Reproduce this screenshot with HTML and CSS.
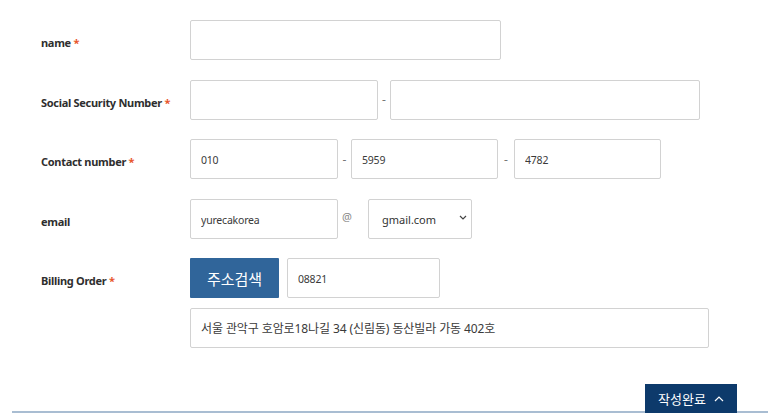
FILE: index.html
```html
<!DOCTYPE html>
<html lang="ko">
<head>
<meta charset="utf-8">
<link rel="stylesheet" href="styles.css">
</head>
<body>
<form class="form">
  <div class="row">
    <label class="label">name <span class="req">*</span></label>
    <div class="fields">
      <input class="box w-name" type="text">
    </div>
  </div>
  <div class="row">
    <label class="label">Social Security Number <span class="req">*</span></label>
    <div class="fields">
      <input class="box w-ssn1" type="text">
      <span class="sep sep-ssn">-</span>
      <input class="box w-ssn2" type="text">
    </div>
  </div>
  <div class="row">
    <label class="label">Contact number <span class="req">*</span></label>
    <div class="fields">
      <input class="box w-ph" type="text" value="010">
      <span class="sep sep-ph1">-</span>
      <input class="box w-ph2" type="text" value="5959">
      <span class="sep sep-ph2">-</span>
      <input class="box w-ph2" type="text" value="4782">
    </div>
  </div>
  <div class="row">
    <label class="label">email</label>
    <div class="fields">
      <input class="box w-ph" type="text" value="yurecakorea">
      <span class="sep sep-at">@</span>
      <div class="select">
        <span>gmail.com</span>
        <svg class="chev" width="8" height="5" viewBox="0 0 8 5"><path d="M1 1l3 3 3-3" fill="none" stroke="#444" stroke-width="1.2"/></svg>
      </div>
    </div>
  </div>
  <div class="row">
    <label class="label">Billing Order <span class="req">*</span></label>
    <div class="fields">
      <button type="button" class="search">주소검색</button>
      <input class="box w-zip" type="text" value="08821">
    </div>
  </div>
  <div class="addr-row">
    <input class="box w-addr addr" type="text" value="서울 관악구 호암로18나길 34 (신림동) 동산빌라 가동 402호">
  </div>
  <div class="footer">
    <button type="button" class="submit">작성완료 <svg width="10" height="6" viewBox="0 0 10 6"><path d="M1 5l4-4 4 4" fill="none" stroke="#fff" stroke-width="1.2"/></svg></button>
  </div>
</form>
</body>
</html>
```
FILE: styles.css
```css
* { box-sizing: border-box; }
html, body { margin: 0; padding: 0; background: #fff; }
body {
  width: 768px;
  height: 415px;
  overflow: hidden;
  font-family: "Noto Sans", "Open Sans", "Noto Sans CJK KR", sans-serif;
  color: #333;
}
.form { padding-top: 20px; }
.row {
  display: flex;
  align-items: center;
  height: 40px;
  margin-bottom: 19.5px;
}
.label {
  width: 190px;
  padding-left: 41px;
  padding-top: 5px;
  font-size: 11px;
  font-weight: 700;
  color: #2e2e2e;
  letter-spacing: -0.3px;
}
.req { color: #e8552c; }
.fields { display: flex; align-items: center; height: 40px; }
.box {
  height: 40px;
  border: 1px solid #d2d2d2;
  border-radius: 2px;
  padding: 2px 10px 0;
  font-family: "Noto Sans", "Noto Sans CJK KR", sans-serif;
  font-size: 10.5px;
  letter-spacing: -0.2px;
  color: #3a3a3a;
  outline: none;
  background: #fff;
}
.w-name { width: 311px; }
.w-ssn1 { width: 188px; }
.w-ssn2 { width: 310px; }
.w-ph { width: 148px; }
.w-ph2 { width: 147px; }
.w-zip { width: 153px; }
.w-addr { width: 519px; }
.sep {
  font-size: 12px;
  color: #777;
  text-align: center;
}
.sep-ssn { width: 12px; }
.sep-ph1 { width: 13px; }
.sep-ph2 { width: 16px; }
.sep-at {
  width: 30px;
  padding-left: 4px;
  text-align: left;
  font-size: 11px;
  color: #888;
  position: relative;
  top: -2px;
}
.select {
  width: 104px;
  height: 40px;
  border: 1px solid #d2d2d2;
  border-radius: 2px;
  display: flex;
  align-items: center;
  justify-content: space-between;
  padding: 2px 4px 0 13px;
  font-size: 11px;
  color: #333;
}
.chev { margin-top: -4px; }
.search {
  width: 89px;
  height: 40px;
  border: 0;
  border-radius: 1px;
  background: #30659a;
  color: #fff;
  font-family: "Noto Sans CJK KR", sans-serif;
  font-size: 15px;
  padding: 0;
  margin-right: 8px;
}
.addr-row {
  padding-left: 190px;
  margin-top: -9.5px;
}
.addr { font-size: 12px; letter-spacing: -0.1px; padding-top: 0; }
.footer {
  margin-top: 36px;
  margin-left: 12px;
  height: 29px;
  border-bottom: 2px solid #a9bdd2;
  display: flex;
  justify-content: flex-end;
  padding-right: 31px;
}
.submit {
  width: 92px;
  height: 29px;
  border: 0;
  background: #0d3a6b;
  color: #fff;
  font-family: "Noto Sans CJK KR", sans-serif;
  font-size: 13px;
  padding: 0;
  display: flex;
  align-items: center;
  justify-content: center;
  gap: 8px;
  position: relative;
  z-index: 1;
  margin-bottom: -2px;
}
```
